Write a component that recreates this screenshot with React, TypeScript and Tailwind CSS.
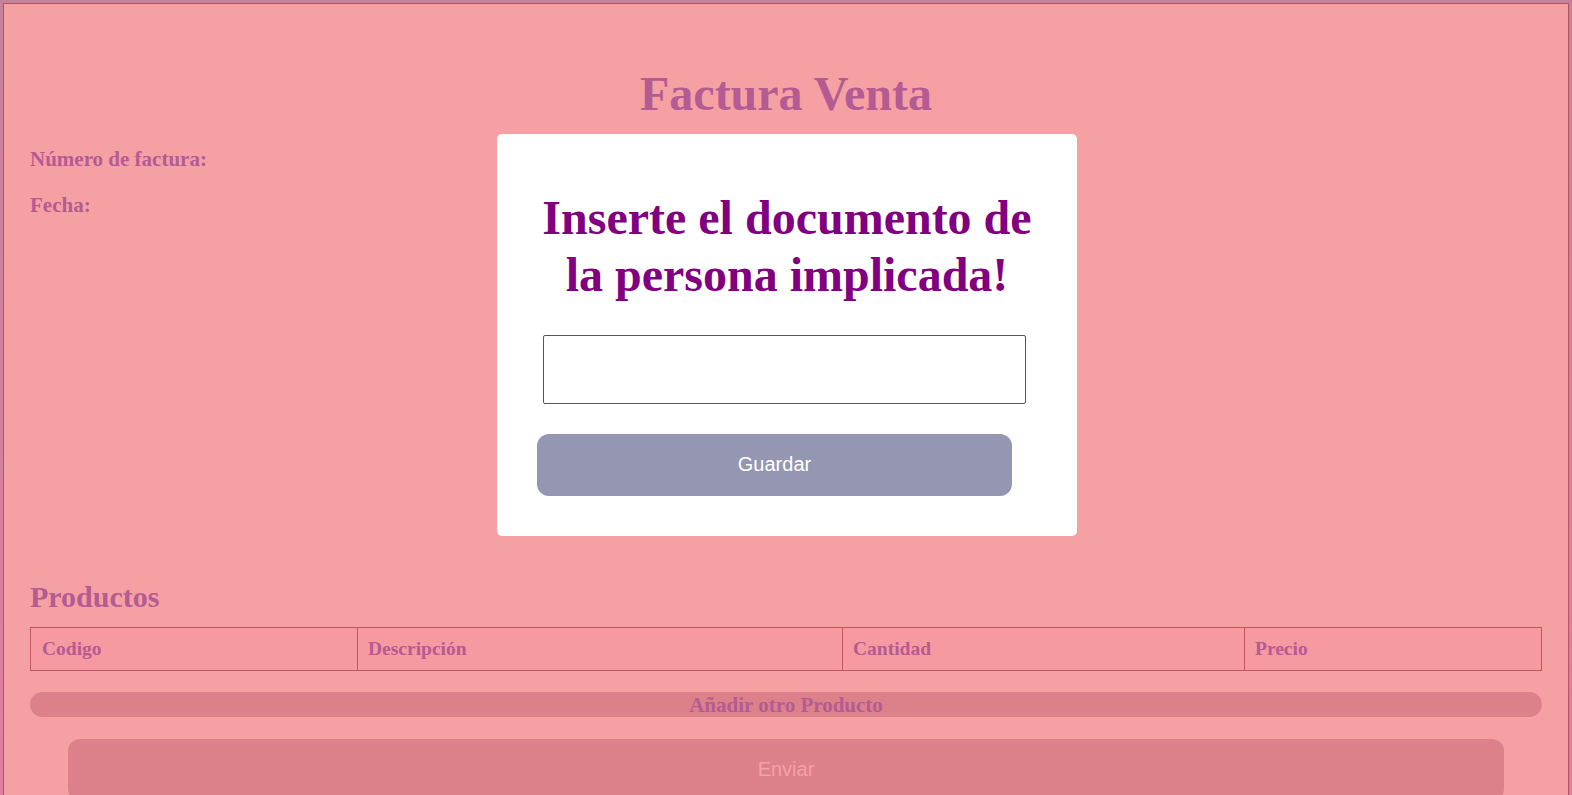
import React from "react";

const serif = { fontFamily: '"Liberation Serif", "Times New Roman", serif' };

export default function App() {
  return (
    <div className="relative h-[795px] w-[1572px] overflow-hidden bg-gradient-to-b from-[#c6829b] to-[#e07fa0] pt-[3px] px-[3px]">
      <div
        className="border border-[#b4545e] bg-[#f5a0a2] px-[26px] pb-[40px] h-[900px]"
        style={serif}
      >
        <h1 className="mt-[62px] text-center text-[48px] leading-[55px] font-bold text-[#b55b94]">
          Factura Venta
        </h1>
        <p className="mt-[26px] text-[21px] leading-[24px] font-bold text-[#b55b94]">
          Número de factura:
        </p>
        <p className="mt-[22px] text-[21px] leading-[24px] font-bold text-[#b55b94]">
          Fecha:
        </p>
        <h2 className="mt-[363px] text-[30px] leading-[34px] font-bold text-[#b55b94]">
          Productos
        </h2>
        <table className="mt-[13px] w-full border-collapse bg-[#f799a1]">
          <thead>
            <tr>
              <th className="h-[43px] w-[327px] border border-[#c0565e] px-[11px] text-left text-[19.5px] font-bold text-[#b55b94]">
                Codigo
              </th>
              <th className="h-[43px] w-[485px] border border-[#c0565e] px-[10px] text-left text-[19.5px] font-bold text-[#b55b94]">
                Descripción
              </th>
              <th className="h-[43px] w-[402px] border border-[#c0565e] px-[10px] text-left text-[19.5px] font-bold text-[#b55b94]">
                Cantidad
              </th>
              <th className="h-[43px] border border-[#c0565e] px-[10px] text-left text-[19.5px] font-bold text-[#b55b94]">
                Precio
              </th>
            </tr>
          </thead>
        </table>
        <button
          className="mt-[21px] flex h-[25px] w-full items-center justify-center rounded-full bg-[#dc8189] text-[21px] leading-[24px] font-bold text-[#b55b94]"
          style={serif}
        >
          Añadir otro Producto
        </button>
        <button
          className="mx-auto mt-[22px] block h-[62px] w-[95%] rounded-[12px] bg-[#dc8189] text-[20px] leading-[24px] pb-[2px] text-[#f5a0a6]"
          style={{ fontFamily: '"Liberation Sans", Arial, sans-serif' }}
        >
          Enviar
        </button>
      </div>

      <div className="absolute left-[497px] top-[134px] h-[402px] w-[580px] rounded-[5px] bg-white">
        <h2
          className="mx-auto mt-[55px] w-[510px] text-center text-[48px] leading-[57.4px] font-bold text-[#800080]"
          style={serif}
        >
          Inserte el documento de la persona implicada!
        </h2>
        <div className="ml-[46px] mt-[31px] h-[69px] w-[483px] rounded-[2px] border border-[#555555] bg-white" />
        <button
          className="ml-[40px] mt-[30px] block h-[62px] w-[475px] rounded-[12px] bg-[#9496b2] text-[20px] leading-[24px] pb-[2px] text-white"
          style={{ fontFamily: '"Liberation Sans", Arial, sans-serif' }}
        >
          Guardar
        </button>
      </div>
    </div>
  );
}
